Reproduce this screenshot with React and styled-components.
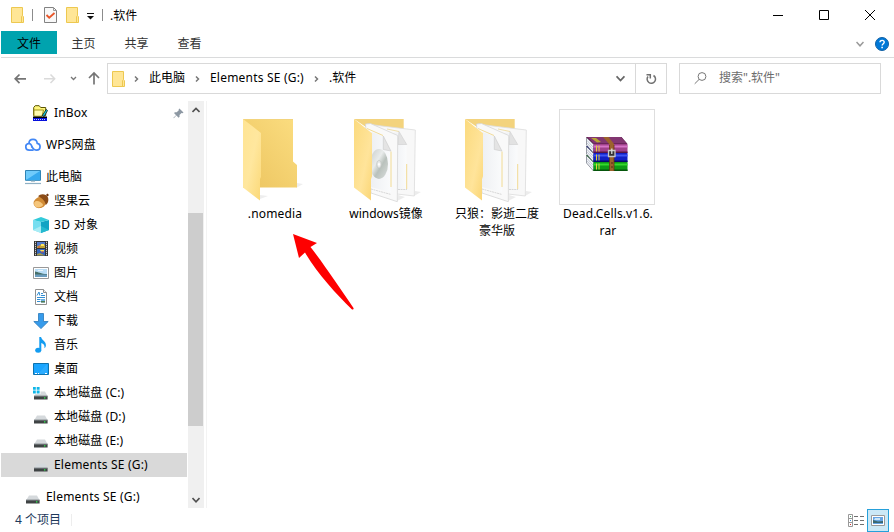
import React from "react";
import styled, { createGlobalStyle } from "styled-components";

const Global = createGlobalStyle`
  * { box-sizing: border-box; }
  body { margin: 0; background: #fff; overflow: hidden; }
  svg { display: block; flex: none; }
`;

const Window = styled.div`
  position: relative;
  width: 894px;
  height: 532px;
  display: flex;
  flex-direction: column;
  background: #fff;
  color: #000;
  font: 12px/16px "Noto Sans", "Noto Sans CJK SC", sans-serif;
  white-space: nowrap;
`;

const TitleBar = styled.header`
  height: 31px;
  display: flex;
  align-items: center;
  padding: 0 0 1px 11px;
`;
const Divider = styled.i`
  width: 1px;
  height: 12px;
  background: #8c8c8c;
  margin: 0 ${(p) => p.$after}px 1px ${(p) => p.$before}px;
`;
const Title = styled.span`
  flex: 1;
  padding-top: 2px;
`;
const Controls = styled.div`
  display: flex;
  gap: 36px;
  padding-right: 19px;
`;
const QuickBar = styled.div`
  display: flex;
  align-items: center;
  margin-left: 9px;
`;
const MenuMark = styled.svg`
  margin: 3px 0 0 8px;
`;

const Tabs = styled.nav`
  height: 27px;
  display: flex;
  align-items: flex-start;
  border-bottom: 1px solid #dadbdc;
  margin-left: 1px;
`;
const Tab = styled.span`
  width: ${(p) => (p.$active ? 56 : 53)}px;
  height: 23px;
  line-height: 25px;
  text-align: center;
  color: ${(p) => (p.$active ? "#000" : "#333")};
  background: ${(p) => (p.$active ? "#00a3ae" : "transparent")};
`;
const TabTools = styled.div`
  margin-left: auto;
  display: flex;
  align-items: center;
  gap: 11px;
  height: 26px;
  padding-right: 5px;
`;

const AddressRow = styled.div`
  height: 43px;
  padding: 5px 13px 0 13px;
  display: flex;
`;
const Arrows = styled.div`
  width: 94px;
  height: 31px;
`;
const AddressBox = styled.div`
  width: 560px;
  height: 31px;
  border: 1px solid #d9d9d9;
  display: flex;
  align-items: center;
  padding-left: 4px;
`;
const Crumb = styled.span`
  width: ${(p) => p.$w}px;
  line-height: 28px;
  padding-bottom: 1px;
  letter-spacing: ${(p) => p.$ls || 0}px;
`;
const CrumbArrow = styled.svg`
  margin: 0 ${(p) => p.$after}px 0 ${(p) => p.$before}px;
`;
const DropCell = styled.div`
  margin-left: auto;
  width: 29px;
  display: flex;
  justify-content: center;
`;
const RefreshCell = styled.div`
  width: 31px;
  height: 29px;
  border-left: 1px solid #d9d9d9;
  display: flex;
  align-items: center;
  justify-content: center;
`;
const SearchBox = styled.div`
  width: 202px;
  height: 31px;
  margin-left: 12px;
  border: 1px solid #d9d9d9;
  display: flex;
  align-items: center;
  gap: 12px;
  padding: 0 0 1px 14px;
  color: #6d6d6d;
`;

const Body = styled.div`
  display: flex;
  height: 407px;
`;
const Sidebar = styled.aside`
  width: 187px;
  padding-left: 1px;
  overflow: hidden;
`;
const Row = styled.div`
  height: 24px;
  margin-bottom: ${(p) => p.$gap || 0}px;
  padding: 0 3px 0 ${(p) => (p.$depth ? 32 : 24)}px;
  display: flex;
  align-items: center;
  background: ${(p) => (p.$selected ? "#d9d9d9" : "transparent")};
`;
const RowLabel = styled.span`
  flex: 1;
  margin-left: 5px;
  line-height: 24px;
  letter-spacing: ${(p) => p.$ls || 0}px;
`;
const ScrollTrack = styled.div`
  width: 16px;
  margin-left: 1px;
  background: #f0f0f0;
  display: flex;
  flex-direction: column;
  align-items: center;
  padding: 5px 0 4px;
`;
const ScrollThumb = styled.div`
  width: 15px;
  height: 213px;
  align-self: flex-start;
  background: #cdcdcd;
  margin: 99px 0 auto;
`;
const Files = styled.main`
  position: relative;
  flex: 1;
  margin-left: 2px;
  border-left: 1px solid #f3f3f3;
  padding: 8px 0 0 19px;
  display: flex;
  align-items: flex-start;
  gap: 15px;
`;
const File = styled.div`
  width: 96px;
  text-align: center;
`;
const FileIcon = styled.div`
  width: 96px;
  height: 96px;
  border: 1px solid ${(p) => (p.$framed ? "#dedede" : "transparent")};
  svg { margin: -1px; }
`;
const FileLabel = styled.div`
  margin: 0 -5px 0 -3px;
  line-height: 17px;
  white-space: pre-line;
  letter-spacing: ${(p) => p.$ls || 0}px;
`;
const ArrowMark = styled.svg`
  position: absolute;
  left: 84px;
  top: 129px;
`;

const StatusBar = styled.footer`
  height: 24px;
  display: flex;
  align-items: center;
  padding: 0 5px 0 15px;
  color: #1e395b;
`;
const StatusSep = styled.i`
  width: 1px;
  height: 12px;
  margin-left: 10px;
  background: #ededed;
`;
const Views = styled.div`
  margin-left: auto;
  display: flex;
  align-items: center;
  gap: 3px;
`;
const ActiveView = styled.div`
  width: 22px;
  height: 23px;
  border: 1px solid #26a0da;
  background: #cbe8f6;
  display: flex;
  align-items: center;
  justify-content: center;
`;

const SmallFolder = () => (
  <svg width="13" height="16" viewBox="0 0 13 16">
    <path d="M.5.5h11v8.200l1 1v5.800H.5z" fill="#ffe696" stroke="#edc850" />
    <path d="M10.500 15V9.500l1-.8" fill="none" stroke="#edc850" />
  </svg>
);

const Chevron = ({ color = "#666", size = 8, w = 1.5 }) => (
  <svg width={size} height={size} viewBox="0 0 8 8">
    <path d="M.5 2 4 5.800 7.500 2" fill="none" stroke={color} strokeWidth={w} />
  </svg>
);

const Separator = ({ before, after }) => (
  <CrumbArrow width="5" height="8" viewBox="0 0 5 8" $before={before} $after={after}>
    <path d="M1 1.500l2.500 2.500L1 6.500" fill="none" stroke="#777" strokeWidth="1.500" />
  </CrumbArrow>
);

const Drive = ({ windows }) => (
  <svg width="16" height="16" viewBox="0 0 16 16">
    <path d="M4 6.500h8L14.500 11H1.300z" fill="#d5d9dc" />
    <path d="M1 11h13.600v3.500H1z" fill="#3f4344" />
    <path d="M1 10.500h13.600v1H1z" fill="#8a9094" />
    <path d="M11 12.200h1.400v1.300H11z" fill="#2cf04b" />
    {windows && (
      <>
        <path d="M0 1h7.500v8H0z" fill="#fff" />
        <path d="M0 2h2.800v2.800H0zM3.700 2h2.900v2.800H3.700zM0 5.600h2.800v2.800H0zM3.700 5.600h2.900v2.800H3.700z" fill="#10b6e8" />
      </>
    )}
  </svg>
);

const art = {
  inbox: (
    <>
      <path d="M.7 10.500V2.500l1.500-1.800h4l1.500 1.800h5v8z" fill="#fff67c" stroke="#5b5500" />
      <path d="M1 11.200V5h9.500l-1.500 6.200z" fill="#fffbb0" stroke="#8a8200" strokeWidth=".8" />
      <path d="M9.300 10.500l3.900-6 1.300 1-3.300 6z" fill="#16d4e6" stroke="#111" strokeWidth=".8" />
      <path d="M0 11.500h14v1.500H0z" fill="#000" />
      <path d="M0 13h14v3H0z" fill="#0710dc" />
      <path d="M1 14.500h12" stroke="#fff" strokeWidth=".8" strokeDasharray="1 1" />
    </>
  ),
  cloud: (
    <g fill="none" stroke="#4287f5" strokeWidth="1.7" strokeLinecap="round">
      <path d="M4 6.400C4 1.200 11.800.9 12.200 6.300c4 .6 3.800 6.800-.5 6.800-2.400 0-3.800-1.500-4.800-3.200" />
      <path d="M8 13.100H4.200C-.2 13.100-.4 7 3.800 6.500 6 6.300 6.500 8 7 9.800" />
    </g>
  ),
  pc: (
    <>
      <path d="M.5 1.500h15v9.800H.5z" fill="#6fcbfb" stroke="#2f84b5" />
      <path d="M1 11 15 2v9z" fill="#35a9ee" />
      <path d="M6 11.800h4v1.200H6z" fill="#b8c8d1" />
      <path d="M0 14.500h16" stroke="#8fb0c4" strokeWidth="1.200" />
    </>
  ),
  nut: (
    <>
      <path d="M.8 8.500C3.500 3.500 10 2 12.800 5.300c1.500 4.500-1 9.200-6 9.800C2.500 15.500-.3 12.200.8 8.500z" fill="#d18b35" />
      <path d="M1.200 9.500c2-2.600 6.400-1.500 9 2.500-2 3.200-8.300 3.500-9-.5z" fill="#f5c67c" />
      <path d="M5 3.200C7.500.3 13 .4 15 4.400c1 3-.2 6.400-2.400 7.700-.1-3.400-2.800-7-7.600-8.900z" fill="#8b4c17" />
      <path d="M13 2l1.300-1.600L16 2l-1.500 1.500z" fill="#6f3510" />
    </>
  ),
  cube: (
    <>
      <path d="M0 3l8 2v11l-8-3z" fill="#77def0" />
      <path d="M8 5l8-2v10l-8 3z" fill="#12a4c4" />
      <path d="M0 3l8-3 8 3-8 2z" fill="#32cada" />
      <path d="M8 9l8 4-8 3z" fill="#25bad0" />
      <path d="M8 9l-8 4 8 3z" fill="#a8ecf5" />
    </>
  ),
  video: (
    <>
      <path d="M1 0h14v15H1z" fill="#333" />
      <path d="M4 1h8v6H4z" fill="#5279ca" />
      <path d="M4 8h8v6.500H4z" fill="#3467bd" />
      <path d="M4 5.500l3-1.500 2-1 3 1v3H4z" fill="#bda239" />
      <path d="M8 3h3v2H8zM7 9h4v1.500H8z" fill="#ffe45b" />
      <path d="M5 5.500h2v1H5zM8.500 10.500h2v1h-2z" fill="#e2403f" />
      <path d="M4 13l3-1 5 2.500H4z" fill="#a59a4d" />
      <path d="M2.500.8V15M13.500.8V15" stroke="#eee" strokeWidth="1" strokeDasharray="1 1" />
    </>
  ),
  picture: (
    <>
      <path d="M.5 2.500h15v11H.5z" fill="#fff" stroke="#999" />
      <path d="M2 4h12v8H2z" fill="#b9ddf6" />
      <path d="M2 6.500c3 .2 6 2.500 12 2.500v1H2z" fill="#466f68" />
      <path d="M2 9.500h12V12H2z" fill="#6a9cbe" />
      <path d="M5 5h5v1H5z" fill="#e9f5fc" />
    </>
  ),
  document: (
    <>
      <path d="M2.500.5h8l3 3v12h-11z" fill="#fff" stroke="#909090" />
      <path d="M10.500.5v3h3" fill="#eee" stroke="#909090" />
      <path d="M4 6.500 6 3l.8 3.500M8 4.500h2M8 6.500h4M4 8.500h8M4 10.500h3.500M4 12.500h3.500" fill="none" stroke="#328ed3" />
      <path d="M8 10h4v3.500H8z" fill="#6db0e2" />
      <path d="M8 12h4v1.500H8z" fill="#507b52" />
    </>
  ),
  download: <path d="M5.500.5h5v8h4.700L8 15.600.8 8.500h4.700z" fill="#379beb" stroke="#2a79ba" strokeWidth=".8" />,
  music: (
    <>
      <ellipse cx="5.200" cy="13.200" rx="3" ry="2.500" fill="#139cf1" />
      <path d="M6.300 13V0h1.800c.3 3.200 5.200 4 4.800 8.500-.1 1.300-.8 2.300-1.500 2.800.6-3-.8-4.500-3.100-5.300v7.500z" fill="#139cf1" />
    </>
  ),
  desktop: (
    <>
      <path d="M.5 2.500h15v11H.5z" fill="#1aa5ff" stroke="#0d72ae" />
      <path d="M5 13 14 3v10z" fill="#43b5ff" opacity=".45" />
      <path d="M2 12.500h2M5 12.500h1M12 12.500h2" stroke="#fff" />
    </>
  ),
};

const NavIcon = ({ kind }) =>
  kind === "drive" || kind === "system" ? (
    <Drive windows={kind === "system"} />
  ) : (
    <svg width="16" height="16" viewBox="0 0 16 16">{art[kind]}</svg>
  );

const Pin = () => (
  <svg width="11" height="11" viewBox="0 0 11 11">
    <path d="M6.400.5l4.100 4.100-1 .6-1-.2-2 2.100.1 1.700-1 .9-2.200-2.200L.8 10.200l-.4-.4 2.700-2.600L1 5.100l1-.9 1.700.1 2.100-2-.1-1z" fill="#8d98a3" />
  </svg>
);

const places = [
  { icon: "inbox", label: "InBox", depth: 1, gap: 8, pin: true, ls: 0.15 },
  { icon: "cloud", label: "WPS网盘", gap: 8, ls: 0.2 },
  { icon: "pc", label: "此电脑" },
  { icon: "nut", label: "坚果云", depth: 1 },
  { icon: "cube", label: "3D 对象", depth: 1, ls: 0.3 },
  { icon: "video", label: "视频", depth: 1 },
  { icon: "picture", label: "图片", depth: 1 },
  { icon: "document", label: "文档", depth: 1 },
  { icon: "download", label: "下载", depth: 1 },
  { icon: "music", label: "音乐", depth: 1 },
  { icon: "desktop", label: "桌面", depth: 1 },
  { icon: "system", label: "本地磁盘 (C:)", depth: 1, ls: 0.12 },
  { icon: "drive", label: "本地磁盘 (D:)", depth: 1, ls: 0.12 },
  { icon: "drive", label: "本地磁盘 (E:)", depth: 1, ls: 0.12 },
  { icon: "drive", label: "Elements SE (G:)", depth: 1, gap: 8, selected: true, ls: 0.2 },
  { icon: "drive", label: "Elements SE (G:)", ls: 0.2 },
];

const EmptyFolder = () => (
  <svg width="96" height="96" viewBox="0 0 96 96">
    <defs>
      <linearGradient id="back" x1="0" y1="1" x2="1" y2="0">
        <stop offset="0" stopColor="#ecc45f" />
        <stop offset="1" stopColor="#fbdd80" />
      </linearGradient>
      <linearGradient id="front" x1="0" y1="0" x2="1" y2="1">
        <stop offset="0" stopColor="#ffe493" />
        <stop offset=".5" stopColor="#ffe79e" />
        <stop offset="1" stopColor="#fbd877" />
      </linearGradient>
    </defs>
    <path d="M34 90l8-3-8-1zM70 79l7-4-6-1z" fill="#eee" />
    <path d="M17 10h50v42.500l4 3.500v22.500H17z" fill="url(#back)" />
    <path d="M17 10.500h50" stroke="#f3d47c" />
    <path d="M17 10l18 14v44l-1 2v21.500L17 78.500z" fill="url(#front)" />
  </svg>
);

const FullFolder = ({ disc }) => (
  <svg width="96" height="96" viewBox="0 0 96 96">
    <defs>
      <linearGradient id="flap" x1="0" y1="0" x2="1" y2="1">
        <stop offset="0" stopColor="#fbda7e" />
        <stop offset=".6" stopColor="#ffe49a" />
        <stop offset="1" stopColor="#fad574" />
      </linearGradient>
      <linearGradient id="paper" x1="0" y1="0" x2="1" y2="0">
        <stop offset="0" stopColor="#eef0f3" />
        <stop offset="1" stopColor="#fafbfc" />
      </linearGradient>
      <linearGradient id="disc" x1="0" y1="0" x2="1" y2="1">
        <stop offset="0" stopColor="#c9cdcb" />
        <stop offset=".4" stopColor="#e9eceb" />
        <stop offset=".6" stopColor="#b9c1bc" />
        <stop offset="1" stopColor="#dbdfdd" />
      </linearGradient>
    </defs>
    <path d="M60 92l8-4-7-2zM77 87l7-4-6-1z" fill="#ececec" />
    <path d="M17 10h49.700v10H32z" fill="#f3d37d" />
    <path d="M30 15l15 2 33.300 4-1 66L60 85 34 60z" fill="#f8f8f8" stroke="#dcdcdc" strokeWidth=".8" />
    <path d="M56 24l6-1 7.500 13v45H58z" fill="url(#paper)" />
    <path d="M50 20l12 2.500" stroke="#eedb9f" strokeWidth=".9" />
    <path d="M69.700 55v25" stroke="#f0d789" strokeWidth=".9" />
    <path d="M62 22.500l7.700 13H61z" fill="#e2e2e2" stroke="#cfcfcf" strokeWidth=".6" />
    <path d="M61 80.500h9" stroke="#c9c9c9" strokeWidth=".7" strokeDasharray="2 .6" />
    <path d="M28.500 15l5-.5L60.700 26.500l-.4 66.200L34 84z" fill="#f9f9f9" stroke="#d6d6d6" strokeWidth=".8" />
    <path d="M34 23l12.300 4 7.600 15v41.500L34 78z" fill="url(#paper)" />
    <path d="M30 19.500l16 7" stroke="#efd78e" strokeWidth=".9" />
    <path d="M54 42.500V78" stroke="#f0d789" strokeWidth=".9" />
    <path d="M46.300 27v13.500l7.600 1.500z" fill="#e4e4e4" stroke="#cfcfcf" strokeWidth=".7" />
    <path d="M34 80l20 5.500" stroke="#c9c9c9" strokeWidth=".7" strokeDasharray="2 .6" />
    {disc && (
      <>
        <ellipse cx="42" cy="55" rx="9" ry="15" fill="url(#disc)" />
        <ellipse cx="42" cy="55.300" rx="2.300" ry="3.800" fill="#e7e9e8" stroke="#b8bdba" strokeWidth=".6" />
        <ellipse cx="42" cy="55.300" rx=".9" ry="1.500" fill="#fff" />
      </>
    )}
    <path d="M17 10l18 14.300v43l-1 3V91.500l-17-13z" fill="url(#flap)" />
  </svg>
);

const books = [
  { y: 18, light: "#35d82d", main: "#0d9b15", dark: "#05550b" },
  { y: 9, light: "#3e55f5", main: "#1220c4", dark: "#060b69" },
  { y: 0, light: "#d574c6", main: "#a0408c", dark: "#571447" },
];

const Archive = () => (
  <svg width="96" height="96" viewBox="0 0 96 96">
    {books.map((b) => (
      <g key={b.y} transform={`translate(0 ${b.y})`}>
        <path d="M27.500 28.500l7 7v8.500l-7-8z" fill="#f1f3f7" stroke="#555a69" strokeWidth=".6" />
        <path d="M28 31.500l6.500 7M28 34l6.500 7" stroke="#a4adbd" strokeWidth=".6" />
        <path d="M27 28h35.500l6 7H34.500z" fill={b.dark} />
        <path d="M34.500 35h34v9h-34z" fill={b.main} />
        <path d="M34.500 36.500h34v2h-34z" fill={b.light} />
        <path d="M34.500 42.500h34V44h-34z" fill={b.dark} />
        <path d="M37.500 36.500v6M40 36.500v6" stroke="#e3d13a" />
      </g>
    ))}
    <path d="M28 28h34l6 6.500H35z" fill="#823671" />
    <path d="M32 29h5l5 4-4 .5z" fill="#b6a433" />
    <path d="M44 28h5.500l5.500 7v27h-4.500V35.500z" fill="#9c632c" />
    <path d="M50.500 36v26M55 36v26" stroke="#633511" strokeWidth=".8" />
    <path d="M49.500 41.500h6.500v6h-6.500z" fill="#333" stroke="#c9c9c9" strokeWidth="1.300" />
    <path d="M52.800 39.500v5.500" stroke="#ddd" strokeWidth="1.300" />
    <path d="M52 54h2M52 58h2" stroke="#4f2f14" />
  </svg>
);

const files = [
  { label: ".nomedia", icon: <EmptyFolder />, ls: 0.15 },
  { label: "windows镜像", icon: <FullFolder disc /> },
  { label: "只狼：影逝二度\n豪华版", icon: <FullFolder /> },
  { label: "Dead.Cells.v1.6.\nrar", icon: <Archive />, framed: true, ls: 0.12 },
];

function QuickTools() {
  return (
    <QuickBar>
      <SmallFolder />
      <MenuMark width="7" height="7" viewBox="0 0 7 7">
        <path d="M0 .500h7" stroke="#111" />
        <path d="M0 3h7L3.500 6.500z" fill="#111" />
      </MenuMark>
      <Divider $before={8} $after={7} />
    </QuickBar>
  );
}

export default function App() {
  return (
    <Window>
      <Global />
      <TitleBar>
        <SmallFolder />
        <Divider $before={8} $after={11} />
        <svg width="13" height="16" viewBox="0 0 13 16">
          <path d="M.5.500h9l3 3v12H.500z" fill="#f8f8f8" stroke="#828282" />
          <path d="M9.500.500v3h3" fill="none" stroke="#999" />
          <path d="M2.500 8l2.700 2.700L10.500 6" fill="none" stroke="#e8562a" strokeWidth="1.800" />
        </svg>
        <QuickTools />
        <Title>.软件</Title>
        <Controls>
          <svg width="10" height="10" viewBox="0 0 10 10"><path d="M0 5.500h10" stroke="#000" /></svg>
          <svg width="10" height="10" viewBox="0 0 10 10"><path d="M.5.500h9v9h-9z" fill="none" stroke="#000" /></svg>
          <svg width="10" height="10" viewBox="0 0 10 10"><path d="M0 0l10 10M10 0L0 10" stroke="#000" /></svg>
        </Controls>
      </TitleBar>
      <Tabs>
        <Tab $active>文件</Tab>
        <Tab>主页</Tab>
        <Tab>共享</Tab>
        <Tab>查看</Tab>
        <TabTools>
          <Chevron color="#999" />
          <svg width="14" height="14" viewBox="0 0 14 14">
            <circle cx="7" cy="7" r="6.500" fill="#0078d7" stroke="#1160a4" />
            <path d="M5 5.300c0-2.600 4.200-2.400 4.200 0C9.200 6.700 7.100 6.800 7.100 8.600" fill="none" stroke="#fff" strokeWidth="1.400" />
            <path d="M6.300 9.700h1.600v1.500H6.300z" fill="#fff" />
          </svg>
        </TabTools>
      </Tabs>
      <AddressRow>
        <Arrows>
          <svg width="94" height="31" viewBox="0 0 94 31" fill="none">
            <path d="M6.500 11.500 2.200 15.800l4.300 4.300M2 15.800h11" stroke="#757575" strokeWidth="1.700" />
            <path d="M37.500 11.500l4.200 4.300-4.200 4.300M42 15.800H31" stroke="#dadada" strokeWidth="1.500" />
            <path d="M58 14l2.500 2.500L63 14" stroke="#777" strokeWidth="1.300" />
            <path d="M76 15l5-5 5 5M81 10v11.500" stroke="#757575" strokeWidth="1.700" />
          </svg>
        </Arrows>
        <AddressBox>
          <SmallFolder />
          <Separator before={9} after={10} />
          <Crumb $w={36}>此电脑</Crumb>
          <Separator before={10} after={10} />
          <Crumb $w={94} $ls={0.2}>Elements SE (G:)</Crumb>
          <Separator before={10} after={10} />
          <Crumb $w={30}>.软件</Crumb>
          <DropCell><Chevron size={9} w={1.6} /></DropCell>
          <RefreshCell>
            <svg width="12" height="12" viewBox="0 0 12 12" fill="none" stroke="#707070" strokeWidth="1.500">
              <path d="M8.500 2.500A4.200 4.200 0 1 1 3 3.500" />
              <path d="M1.500 1.700h3.800v3.800" />
            </svg>
          </RefreshCell>
        </AddressBox>
        <SearchBox>
          <svg width="13" height="13" viewBox="0 0 13 13" fill="none" stroke="#777">
            <circle cx="8" cy="4.500" r="3.900" />
            <path d="M5 7.500.700 11.800" />
          </svg>
          <span>搜索".软件"</span>
        </SearchBox>
      </AddressRow>
      <Body>
        <Sidebar>
          {places.map((p, i) => (
            <Row key={i} $depth={p.depth} $gap={p.gap} $selected={p.selected}>
              <NavIcon kind={p.icon} />
              <RowLabel $ls={p.ls}>{p.label}</RowLabel>
              {p.pin && <Pin />}
            </Row>
          ))}
        </Sidebar>
        <ScrollTrack>
          <svg width="8" height="8" viewBox="0 0 8 8"><path d="M.5 6 4 2.500 7.500 6" fill="none" stroke="#505050" strokeWidth="1.600" /></svg>
          <ScrollThumb />
          <Chevron color="#505050" w={1.6} />
        </ScrollTrack>
        <Files>
          {files.map((f) => (
            <File key={f.label}>
              <FileIcon $framed={f.framed}>{f.icon}</FileIcon>
              <FileLabel $ls={f.ls}>{f.label}</FileLabel>
            </File>
          ))}
          <ArrowMark width="68" height="84" viewBox="0 0 68 84">
            <path d="M2 4l24 9-6.500 4C32 33 49 58 62.500 78c.500 1.500-1 2-2 1C46 65 25 42 14 22.500L8 28z" fill="#fe0000" />
          </ArrowMark>
        </Files>
      </Body>
      <StatusBar>
        4 个项目
        <StatusSep />
        <Views>
          <svg width="16" height="13" viewBox="0 0 16 13">
            <path d="M.5.500h4v12h-4zM.5 4.500h4M.5 8.500h4" fill="#fff" stroke="#999" />
            <path d="M2 2h1v1H2z" fill="#4a9f6c" />
            <path d="M2 6h1v1H2z" fill="#318de0" />
            <path d="M2 10h1v1H2z" fill="#d83030" />
            <path d="M6 2.500h4M12 2.500h4M6 6.500h4M12 6.500h4M6 10.500h4M12 10.500h4" stroke="#707070" />
          </svg>
          <ActiveView>
            <svg width="14" height="11" viewBox="0 0 14 11">
              <path d="M.5.500h13v10H.500z" fill="#fff" stroke="#999" />
              <path d="M2 2h10v7H2z" fill="#65a4e4" />
              <path d="M4 3h5v2H3z" fill="#cae5f7" />
              <path d="M2 5l5 1.500 5-.500v2H2z" fill="#3b6870" />
            </svg>
          </ActiveView>
        </Views>
      </StatusBar>
    </Window>
  );
}
